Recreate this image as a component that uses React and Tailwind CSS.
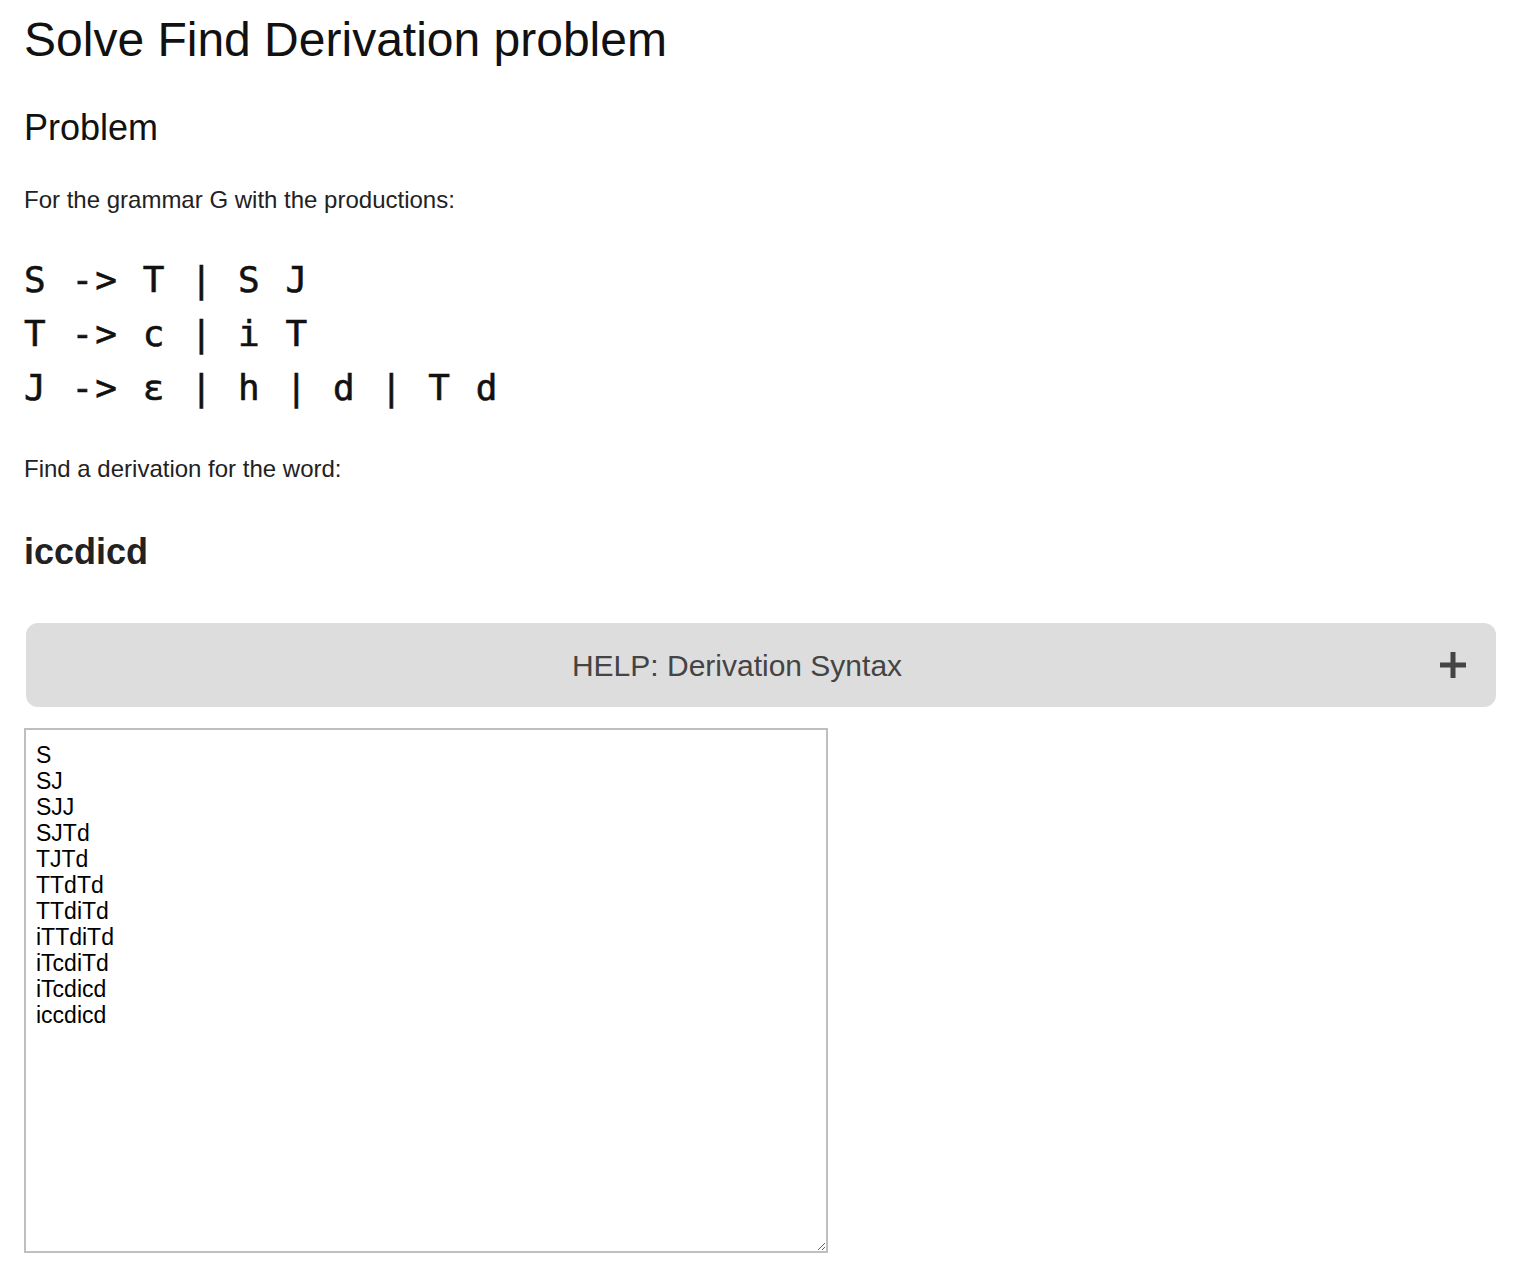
import { useState } from 'react';

const productions = [
  'S -> T | S J',
  'T -> c | i T',
  'J -> ε | h | d | T d',
];

const derivation = [
  'S',
  'SJ',
  'SJJ',
  'SJTd',
  'TJTd',
  'TTdTd',
  'TTdiTd',
  'iTTdiTd',
  'iTcdiTd',
  'iTcdicd',
  'iccdicd',
].join('\n');

function PlusIcon() {
  return (
    <svg width="26" height="26" viewBox="0 0 26 26" className="block">
      <rect x="0" y="10.5" width="26" height="5" fill="#444444" />
      <rect x="10.5" y="0" width="5" height="26" fill="#444444" />
    </svg>
  );
}

export default function App() {
  const [open, setOpen] = useState(false);

  return (
    <div className="min-h-screen bg-white px-6 pt-[12px] pb-6 font-['Liberation_Sans',Arial,sans-serif] text-[#111111]">
      <h1 className="text-[48px] leading-[56px] font-normal">Solve Find Derivation problem</h1>

      <h2 className="mt-[38px] text-[36px] leading-[44px] font-normal">Problem</h2>

      <p className="mt-[34px] text-[24px] leading-[32px] text-[#222222]">
        For the grammar G with the productions:
      </p>

      {/* grammar */}
      <div className="mt-[37px] font-['DejaVu_Sans_Mono',monospace] text-[36px] leading-[54px] font-normal tracking-[2.1px] text-[#111111] [-webkit-text-stroke:0.6px_#111111]">
        {productions.map((line) => (
          <div key={line} className="whitespace-pre">{line}</div>
        ))}
      </div>

      <p className="mt-[38px] text-[24px] leading-[32px] text-[#222222]">Find a derivation for the word:</p>

      <h3 className="mt-[45px] text-[36px] leading-[44px] font-bold text-[#222222]">iccdicd</h3>

      <button
        type="button"
        onClick={() => setOpen(!open)}
        className="mt-[49px] ml-[2px] flex h-[84px] w-[1470px] items-center rounded-[12px] bg-[#dddddd] pl-2 pr-[30px]"
      >
        <span className="flex-1 text-center text-[30px] text-[#444444]">HELP: Derivation Syntax</span>
        <PlusIcon />
      </button>

      <textarea
        defaultValue={derivation}
        spellCheck={false}
        className="mt-[21px] block h-[525px] w-[804px] border-2 border-[#bfbfbf] px-[10px] pt-[12px] pb-[10px] font-['Liberation_Sans',Arial,sans-serif] text-[23px] leading-[26px] text-black outline-none"
      />
    </div>
  );
}
